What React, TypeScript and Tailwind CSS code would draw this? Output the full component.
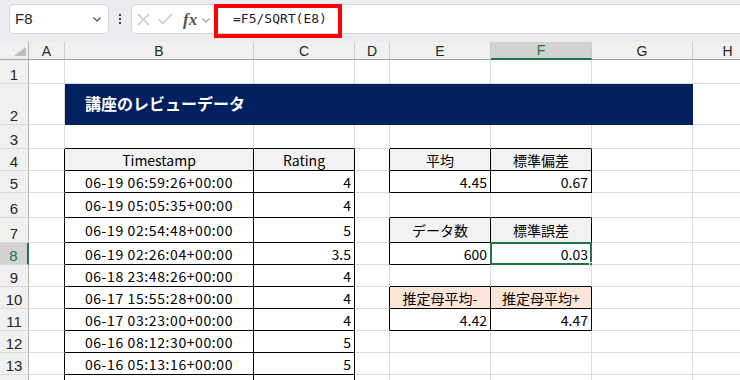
import React from 'react'

type Cell = { v: string; align?: 'center' | 'right'; fill?: 'head' | 'peach'; wide?: boolean }

const COLS = ['A', 'B', 'C', 'D', 'E', 'F', 'G', 'H']
const ROWS = [1, 2, 3, 4, 5, 6, 7, 8, 9, 10, 11, 12, 13, 14]

const reviews: [string, string][] = [
  ['06-19 06:59:26+00:00', '4'],
  ['06-19 05:05:35+00:00', '4'],
  ['06-19 02:54:48+00:00', '5'],
  ['06-19 02:26:04+00:00', '3.5'],
  ['06-18 23:48:26+00:00', '4'],
  ['06-17 15:55:28+00:00', '4'],
  ['06-17 03:23:00+00:00', '4'],
  ['06-16 08:12:30+00:00', '5'],
  ['06-16 05:13:16+00:00', '5'],
]

const cells: Record<string, Cell> = {
  B4: { v: 'Timestamp', align: 'center', fill: 'head' },
  C4: { v: 'Rating', align: 'center', fill: 'head' },
  E4: { v: '平均', align: 'center', fill: 'head' },
  F4: { v: '標準偏差', align: 'center', fill: 'head' },
  E5: { v: '4.45', align: 'right' },
  F5: { v: '0.67', align: 'right' },
  E7: { v: 'データ数', align: 'center', fill: 'head' },
  F7: { v: '標準誤差', align: 'center', fill: 'head' },
  E8: { v: '600', align: 'right' },
  F8: { v: '0.03', align: 'right' },
  E10: { v: '推定母平均-', align: 'center', fill: 'peach' },
  F10: { v: '推定母平均+', align: 'center', fill: 'peach' },
  E11: { v: '4.42', align: 'right' },
  F11: { v: '4.47', align: 'right' },
}
reviews.forEach(([ts, rating], i) => {
  cells[`B${i + 5}`] = { v: ts, align: 'center', wide: true }
  cells[`C${i + 5}`] = { v: rating, align: 'right' }
})

function inTable(r: number, c: number) {
  if (r >= 4 && r <= 14 && (c === 1 || c === 2)) return true
  if ([4, 5, 7, 8, 10, 11].includes(r) && (c === 4 || c === 5)) return true
  return false
}

function GridCell({ r, c }: { r: number; c: number }) {
  const cell = cells[`${COLS[c]}${r}`]
  const blackR = inTable(r, c) || inTable(r, c + 1)
  const blackB = inTable(r, c) || inTable(r + 1, c)
  const selected = r === 8 && c === 5
  const fill =
    cell?.fill === 'head' ? 'bg-[#f2f2f2]' : cell?.fill === 'peach' ? 'bg-[#fce4d6]' : 'bg-white'
  const align =
    cell?.align === 'right' ? 'justify-end pr-[3px]' : cell?.align === 'center' ? 'justify-center' : 'pl-[3px]'
  return (
    <div
      className={`relative flex items-center border-r border-b ${fill} ${align} ${
        blackR ? 'border-r-black' : 'border-r-[#dadada]'
      } ${blackB ? 'border-b-black' : 'border-b-[#dadada]'}`}
    >
      {cell && (
        <span
          className={`whitespace-nowrap text-[14px] leading-none text-black ${cell.wide ? 'tracking-[0.6px]' : ''}`}
        >
          {cell.v}
        </span>
      )}
      {selected && (
        <>
          <div className="absolute -top-[1px] -left-[1px] -right-[1px] -bottom-[1px] border-2 border-[#217346]" />
          <div className="absolute -right-[4px] -bottom-[4px] h-[6px] w-[6px] border border-white bg-[#217346]" />
        </>
      )}
    </div>
  )
}

function RowHeader({ r }: { r: number }) {
  const active = r === 8
  return (
    <div
      className={`flex items-end justify-center border-b border-b-[#dadada] font-['Liberation_Sans'] text-[15px] leading-[16px] ${
        active
          ? 'border-r-2 border-r-[#217346] bg-[#d2d2d2] text-[#217346]'
          : 'border-r border-r-[#b4b4b4] bg-[#f0f0f0] text-[#262626]'
      }`}
    >
      {r < 14 ? r : ''}
    </div>
  )
}

function ColHeader({ label }: { label: string }) {
  const active = label === 'F'
  return (
    <div
      className={`flex items-center justify-center border-r border-r-[#cdcdcd] font-['Liberation_Sans'] text-[14px] leading-none ${
        active
          ? 'border-b-2 border-b-[#217346] bg-[#d2d2d2] text-[#217346]'
          : 'border-b border-b-[#a3a3a3] bg-[#f0f0f0] text-[#262626]'
      }`}
    >
      {label}
    </div>
  )
}

function FormulaBar() {
  return (
    <div className="flex h-[42px] items-start bg-[#eaecef] pt-[4px] pl-[9px] font-['Liberation_Sans']">
      <div className="flex h-[30px] w-[100px] items-center justify-between rounded-[5px] border border-[#d5d7db] bg-white pr-[7px] pl-[5px]">
        <span className="text-[15px] text-[#262626]">F8</span>
        <svg width="8" height="5" viewBox="0 0 8 5" fill="none" stroke="#444" strokeWidth="1.2">
          <path d="M0.5 0.5 L4 4 L7.5 0.5" />
        </svg>
      </div>
      <div className="flex h-[30px] w-[22px] flex-col items-center justify-center gap-[2px]">
        <span className="h-[2px] w-[2px] bg-[#444]" />
        <span className="h-[2px] w-[2px] bg-[#444]" />
        <span className="h-[2px] w-[2px] bg-[#444]" />
      </div>
      <div className="flex h-[30px] flex-1 items-stretch rounded-l-[5px] border border-r-0 border-[#d5d7db] bg-white">
        <div className="flex w-[82px] items-center pl-[5px]">
          <svg width="13" height="13" viewBox="0 0 13 13" stroke="#c4c4c4" strokeWidth="1.2">
            <path d="M1 1 L12 12 M12 1 L1 12" />
          </svg>
          <svg width="15" height="12" viewBox="0 0 15 12" fill="none" stroke="#c4c4c4" strokeWidth="1.2" className="ml-[8px]">
            <path d="M1 6 L5 10.5 L14 1" />
          </svg>
          <span className="ml-[10px] font-['Liberation_Serif'] text-[17px] font-bold italic leading-none text-[#555]">
            fx
          </span>
          <svg width="8" height="5" viewBox="0 0 8 5" fill="none" stroke="#999" strokeWidth="1.1" className="ml-[5px] mt-[2px]">
            <path d="M0.5 0.5 L4 4 L7.5 0.5" />
          </svg>
        </div>
        <div className="relative flex flex-1 items-center pl-[19px]">
          <span className="font-['DejaVu_Sans_Mono'] text-[13px] text-[#1f1f1f]">=F5/SQRT(E8)</span>
          <div className="absolute -top-[1px] left-0 h-[34px] w-[128px] border-4 border-[#ff0000]" />
        </div>
      </div>
    </div>
  )
}

export default function App() {
  return (
    <div className="h-[380px] w-[740px] overflow-hidden bg-white font-['Noto_Sans_CJK_JP',sans-serif]">
      <FormulaBar />
      <div className="grid grid-cols-[29px_36px_189px_101px_35px_101px_101px_101px_70px] grid-rows-[18px_24px_41px_24px_22px_22px_25px_25px_22px_22px_22px_22px_22px_22px_22px]">
        <div className="relative border-r border-b border-r-[#b4b4b4] border-b-[#a3a3a3] bg-[#f0f0f0]">
          <svg width="12" height="9" viewBox="0 0 12 9" className="absolute top-[5px] left-[14px]">
            <polygon points="12,0 12,9 0,9" fill="#bdbdbd" />
          </svg>
        </div>
        {COLS.map((col) => (
          <ColHeader key={col} label={col} />
        ))}
        {ROWS.map((r) => (
          <React.Fragment key={r}>
            <RowHeader r={r} />
            {r === 2 ? (
              <>
                <GridCell r={2} c={0} />
                <div className="col-span-6 flex items-center bg-[#002060] pb-[3px] pl-[20px]">
                  <span className="text-[16px] font-bold leading-none text-white">講座のレビューデータ</span>
                </div>
                <GridCell r={2} c={7} />
              </>
            ) : (
              COLS.map((_, c) => <GridCell key={c} r={r} c={c} />)
            )}
          </React.Fragment>
        ))}
      </div>
    </div>
  )
}
